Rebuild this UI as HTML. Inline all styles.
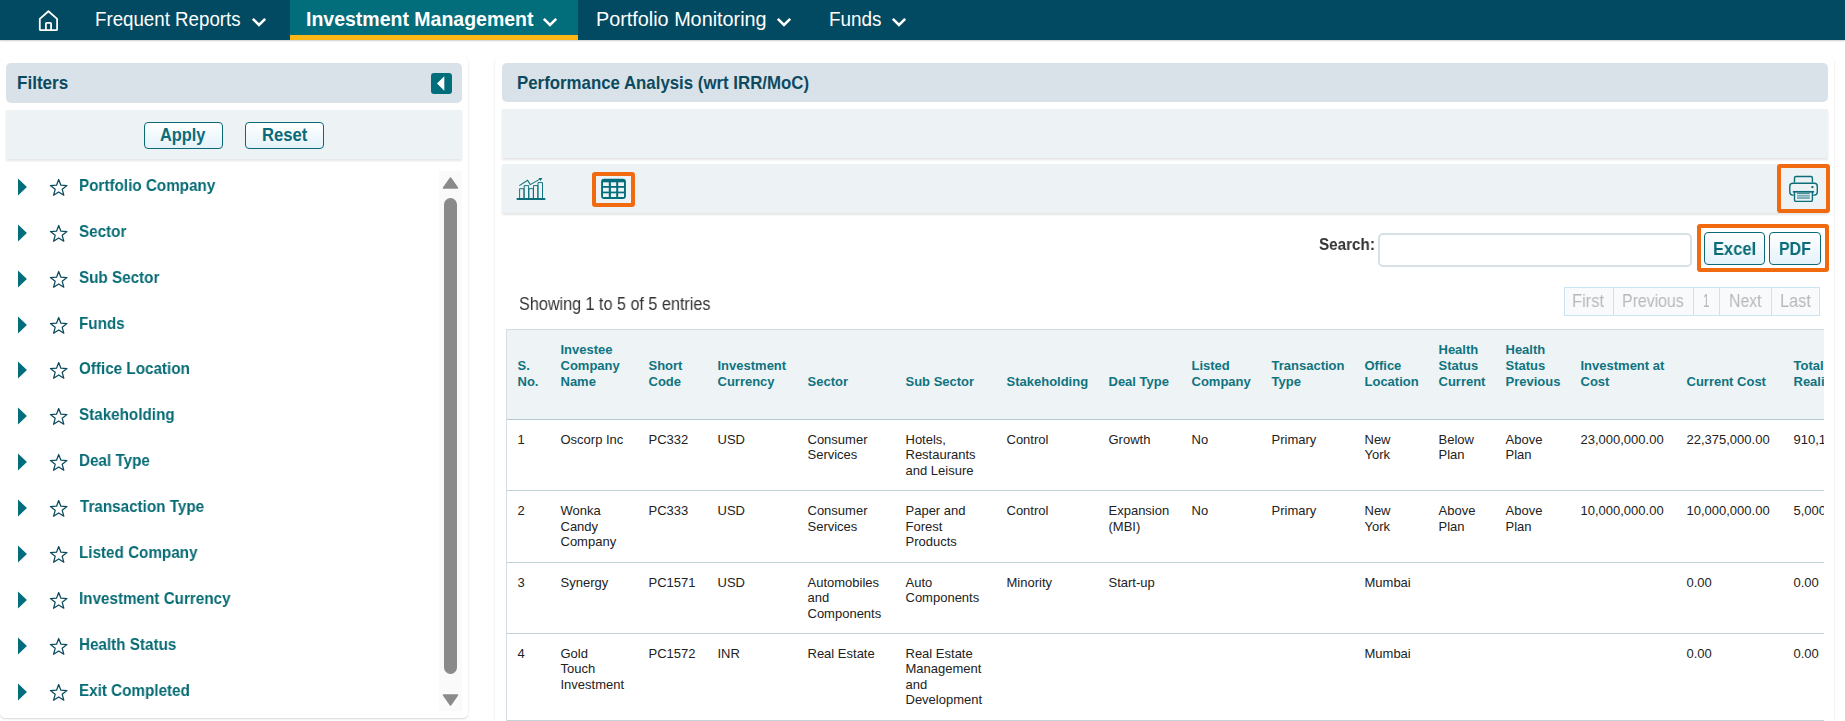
<!DOCTYPE html>
<html><head><meta charset="utf-8">
<style>
*{box-sizing:border-box;margin:0;padding:0}
html,body{width:1845px;height:721px;overflow:hidden;background:#fff;font-family:"Liberation Sans",sans-serif;position:relative}
.abs{position:absolute}
.tx{position:absolute;white-space:nowrap;transform-origin:0 0}
.hdr{background:#d8e2e8;border-radius:5px}
.bar{background:#edf2f5;box-shadow:0 2px 2px rgba(0,0,0,.10)}
.btn{position:absolute;border:1.5px solid #0b6a77;border-radius:4px;background:linear-gradient(#ffffff,#e4f2fa)}
.th{height:89px;background:#eef3f6}
.th th{text-align:left;vertical-align:bottom;padding:0 0 29px 10.5px;font-size:13px;font-weight:700;color:#0f7380;line-height:15.75px;white-space:nowrap;border-bottom:1.5px solid #b3c9d2}
.tr td{text-align:left;vertical-align:top;padding:12px 0 0 10.5px;font-size:13px;color:#222;line-height:15.6px;white-space:nowrap;border-bottom:1.5px solid #c0d2da}
.panel{border-radius:5px;box-shadow:0 1px 2px rgba(0,0,0,.16);background:#fff}

</style></head><body>
<div class="abs" style="left:0;top:0;width:1845px;height:40px;background:#024a62;box-shadow:0 1px 1.5px rgba(0,0,0,.2)"></div>
<div class="abs" style="left:290px;top:0;width:288px;height:40px;background:#036e7b;border-bottom:5px solid #fbb715"></div>
<svg class="abs" style="left:37px;top:9px" width="23" height="24" viewBox="0 0 23 24">
    <path d="M2.8 9.9 L11.45 2.3 L20.1 9.9 V20.2 Q20.1 21.2 19.1 21.2 H3.8 Q2.8 21.2 2.8 20.2 Z" fill="none" stroke="#fff" stroke-width="1.8" stroke-linejoin="round"/>
    <path d="M8.9 21.2 V14.8 Q8.9 13.8 9.9 13.8 H13.1 Q14.1 13.8 14.1 14.8 V21.2" fill="none" stroke="#fff" stroke-width="1.8"/>
  </svg>
<div class="tx" style="left:95.33px;top:9px;font-size:20px;line-height:20px;font-weight:400;color:#fff;transform:scaleX(0.9353);">Frequent Reports</div>
<svg class="abs" style="left:251px;top:17px" width="16" height="11" viewBox="0 0 16 11"><path d="M1.8 1.8 L8 8 L14.2 1.8" fill="none" stroke="#fff" stroke-width="2.6"/></svg>
<div class="tx" style="left:305.93px;top:9px;font-size:20px;line-height:20px;font-weight:700;color:#fff;transform:scaleX(0.9746);">Investment Management</div>
<svg class="abs" style="left:542px;top:17px" width="16" height="11" viewBox="0 0 16 11"><path d="M1.8 1.8 L8 8 L14.2 1.8" fill="none" stroke="#fff" stroke-width="2.6"/></svg>
<div class="tx" style="left:596.02px;top:9px;font-size:20px;line-height:20px;font-weight:400;color:#fff;transform:scaleX(0.9899);">Portfolio Monitoring</div>
<svg class="abs" style="left:776px;top:17px" width="16" height="11" viewBox="0 0 16 11"><path d="M1.8 1.8 L8 8 L14.2 1.8" fill="none" stroke="#fff" stroke-width="2.6"/></svg>
<div class="tx" style="left:829.11px;top:9px;font-size:20px;line-height:20px;font-weight:400;color:#fff;transform:scaleX(0.9453);">Funds</div>
<svg class="abs" style="left:891px;top:17px" width="16" height="11" viewBox="0 0 16 11"><path d="M1.8 1.8 L8 8 L14.2 1.8" fill="none" stroke="#fff" stroke-width="2.6"/></svg>
<div class="abs panel" style="left:0px;top:57px;width:468px;height:661px"></div>
<div class="abs hdr" style="left:6px;top:63px;width:456px;height:40px"></div>
<div class="tx" style="left:17.00px;top:73px;font-size:19px;line-height:19px;font-weight:700;color:#0d4a60;transform:scaleX(0.8982);">Filters</div>
<div class="abs" style="left:431px;top:73px;width:21px;height:21px;background:#036e7b;border-radius:3px"><svg class="abs" style="left:0;top:0" width="21" height="21" viewBox="0 0 21 21"><path d="M13.3 3.2 L6 10.5 L13.3 17.8 Z" fill="#fff"/></svg></div>
<div class="abs bar" style="left:6px;top:110px;width:456px;height:49px"></div>
<div class="btn" style="left:144px;top:122px;width:79px;height:27px"></div>
<div class="btn" style="left:245px;top:122px;width:79px;height:27px"></div>
<div class="tx" style="left:160.14px;top:125px;font-size:19px;line-height:19px;font-weight:700;color:#0a6c78;transform:scaleX(0.8596);">Apply</div>
<div class="tx" style="left:261.82px;top:125px;font-size:19px;line-height:19px;font-weight:700;color:#0a6c78;transform:scaleX(0.8765);">Reset</div>
<svg class="abs" style="left:17px;top:178.00px" width="11" height="18" viewBox="0 0 11 18"><path d="M1 0.6 L9.9 9 L1 17.4 Z" fill="#036e7b"/></svg>
<svg class="abs" style="left:49px;top:178.00px" width="20" height="21" viewBox="0 0 20 21"><path d="M9.70 1.50 L11.87 7.21 L17.97 7.51 L13.22 11.34 L14.81 17.24 L9.70 13.90 L4.59 17.24 L6.18 11.34 L1.43 7.51 L7.53 7.21 Z" fill="none" stroke="#0d4a5e" stroke-width="1.25" stroke-linejoin="round"/></svg>
<div class="tx" style="left:78.88px;top:177px;font-size:16.5px;line-height:16.5px;font-weight:700;color:#076b74;transform:scaleX(0.9231);will-change:transform;">Portfolio Company</div>
<svg class="abs" style="left:17px;top:223.87px" width="11" height="18" viewBox="0 0 11 18"><path d="M1 0.6 L9.9 9 L1 17.4 Z" fill="#036e7b"/></svg>
<svg class="abs" style="left:49px;top:223.87px" width="20" height="21" viewBox="0 0 20 21"><path d="M9.70 1.50 L11.87 7.21 L17.97 7.51 L13.22 11.34 L14.81 17.24 L9.70 13.90 L4.59 17.24 L6.18 11.34 L1.43 7.51 L7.53 7.21 Z" fill="none" stroke="#0d4a5e" stroke-width="1.25" stroke-linejoin="round"/></svg>
<div class="tx" style="left:78.88px;top:223px;font-size:16.5px;line-height:16.5px;font-weight:700;color:#076b74;transform:scaleX(0.9231);will-change:transform;">Sector</div>
<svg class="abs" style="left:17px;top:269.74px" width="11" height="18" viewBox="0 0 11 18"><path d="M1 0.6 L9.9 9 L1 17.4 Z" fill="#036e7b"/></svg>
<svg class="abs" style="left:49px;top:269.74px" width="20" height="21" viewBox="0 0 20 21"><path d="M9.70 1.50 L11.87 7.21 L17.97 7.51 L13.22 11.34 L14.81 17.24 L9.70 13.90 L4.59 17.24 L6.18 11.34 L1.43 7.51 L7.53 7.21 Z" fill="none" stroke="#0d4a5e" stroke-width="1.25" stroke-linejoin="round"/></svg>
<div class="tx" style="left:78.88px;top:269px;font-size:16.5px;line-height:16.5px;font-weight:700;color:#076b74;transform:scaleX(0.9231);will-change:transform;">Sub Sector</div>
<svg class="abs" style="left:17px;top:315.61px" width="11" height="18" viewBox="0 0 11 18"><path d="M1 0.6 L9.9 9 L1 17.4 Z" fill="#036e7b"/></svg>
<svg class="abs" style="left:49px;top:315.61px" width="20" height="21" viewBox="0 0 20 21"><path d="M9.70 1.50 L11.87 7.21 L17.97 7.51 L13.22 11.34 L14.81 17.24 L9.70 13.90 L4.59 17.24 L6.18 11.34 L1.43 7.51 L7.53 7.21 Z" fill="none" stroke="#0d4a5e" stroke-width="1.25" stroke-linejoin="round"/></svg>
<div class="tx" style="left:78.88px;top:315px;font-size:16.5px;line-height:16.5px;font-weight:700;color:#076b74;transform:scaleX(0.9231);will-change:transform;">Funds</div>
<svg class="abs" style="left:17px;top:361.48px" width="11" height="18" viewBox="0 0 11 18"><path d="M1 0.6 L9.9 9 L1 17.4 Z" fill="#036e7b"/></svg>
<svg class="abs" style="left:49px;top:361.48px" width="20" height="21" viewBox="0 0 20 21"><path d="M9.70 1.50 L11.87 7.21 L17.97 7.51 L13.22 11.34 L14.81 17.24 L9.70 13.90 L4.59 17.24 L6.18 11.34 L1.43 7.51 L7.53 7.21 Z" fill="none" stroke="#0d4a5e" stroke-width="1.25" stroke-linejoin="round"/></svg>
<div class="tx" style="left:78.88px;top:360px;font-size:16.5px;line-height:16.5px;font-weight:700;color:#076b74;transform:scaleX(0.9231);will-change:transform;">Office Location</div>
<svg class="abs" style="left:17px;top:407.35px" width="11" height="18" viewBox="0 0 11 18"><path d="M1 0.6 L9.9 9 L1 17.4 Z" fill="#036e7b"/></svg>
<svg class="abs" style="left:49px;top:407.35px" width="20" height="21" viewBox="0 0 20 21"><path d="M9.70 1.50 L11.87 7.21 L17.97 7.51 L13.22 11.34 L14.81 17.24 L9.70 13.90 L4.59 17.24 L6.18 11.34 L1.43 7.51 L7.53 7.21 Z" fill="none" stroke="#0d4a5e" stroke-width="1.25" stroke-linejoin="round"/></svg>
<div class="tx" style="left:78.88px;top:406px;font-size:16.5px;line-height:16.5px;font-weight:700;color:#076b74;transform:scaleX(0.9231);will-change:transform;">Stakeholding</div>
<svg class="abs" style="left:17px;top:453.22px" width="11" height="18" viewBox="0 0 11 18"><path d="M1 0.6 L9.9 9 L1 17.4 Z" fill="#036e7b"/></svg>
<svg class="abs" style="left:49px;top:453.22px" width="20" height="21" viewBox="0 0 20 21"><path d="M9.70 1.50 L11.87 7.21 L17.97 7.51 L13.22 11.34 L14.81 17.24 L9.70 13.90 L4.59 17.24 L6.18 11.34 L1.43 7.51 L7.53 7.21 Z" fill="none" stroke="#0d4a5e" stroke-width="1.25" stroke-linejoin="round"/></svg>
<div class="tx" style="left:78.88px;top:452px;font-size:16.5px;line-height:16.5px;font-weight:700;color:#076b74;transform:scaleX(0.9231);will-change:transform;">Deal Type</div>
<svg class="abs" style="left:17px;top:499.09px" width="11" height="18" viewBox="0 0 11 18"><path d="M1 0.6 L9.9 9 L1 17.4 Z" fill="#036e7b"/></svg>
<svg class="abs" style="left:49px;top:499.09px" width="20" height="21" viewBox="0 0 20 21"><path d="M9.70 1.50 L11.87 7.21 L17.97 7.51 L13.22 11.34 L14.81 17.24 L9.70 13.90 L4.59 17.24 L6.18 11.34 L1.43 7.51 L7.53 7.21 Z" fill="none" stroke="#0d4a5e" stroke-width="1.25" stroke-linejoin="round"/></svg>
<div class="tx" style="left:79.80px;top:498px;font-size:16.5px;line-height:16.5px;font-weight:700;color:#076b74;transform:scaleX(0.9231);will-change:transform;">Transaction Type</div>
<svg class="abs" style="left:17px;top:544.96px" width="11" height="18" viewBox="0 0 11 18"><path d="M1 0.6 L9.9 9 L1 17.4 Z" fill="#036e7b"/></svg>
<svg class="abs" style="left:49px;top:544.96px" width="20" height="21" viewBox="0 0 20 21"><path d="M9.70 1.50 L11.87 7.21 L17.97 7.51 L13.22 11.34 L14.81 17.24 L9.70 13.90 L4.59 17.24 L6.18 11.34 L1.43 7.51 L7.53 7.21 Z" fill="none" stroke="#0d4a5e" stroke-width="1.25" stroke-linejoin="round"/></svg>
<div class="tx" style="left:78.88px;top:544px;font-size:16.5px;line-height:16.5px;font-weight:700;color:#076b74;transform:scaleX(0.9231);will-change:transform;">Listed Company</div>
<svg class="abs" style="left:17px;top:590.83px" width="11" height="18" viewBox="0 0 11 18"><path d="M1 0.6 L9.9 9 L1 17.4 Z" fill="#036e7b"/></svg>
<svg class="abs" style="left:49px;top:590.83px" width="20" height="21" viewBox="0 0 20 21"><path d="M9.70 1.50 L11.87 7.21 L17.97 7.51 L13.22 11.34 L14.81 17.24 L9.70 13.90 L4.59 17.24 L6.18 11.34 L1.43 7.51 L7.53 7.21 Z" fill="none" stroke="#0d4a5e" stroke-width="1.25" stroke-linejoin="round"/></svg>
<div class="tx" style="left:78.88px;top:590px;font-size:16.5px;line-height:16.5px;font-weight:700;color:#076b74;transform:scaleX(0.9231);will-change:transform;">Investment Currency</div>
<svg class="abs" style="left:17px;top:636.70px" width="11" height="18" viewBox="0 0 11 18"><path d="M1 0.6 L9.9 9 L1 17.4 Z" fill="#036e7b"/></svg>
<svg class="abs" style="left:49px;top:636.70px" width="20" height="21" viewBox="0 0 20 21"><path d="M9.70 1.50 L11.87 7.21 L17.97 7.51 L13.22 11.34 L14.81 17.24 L9.70 13.90 L4.59 17.24 L6.18 11.34 L1.43 7.51 L7.53 7.21 Z" fill="none" stroke="#0d4a5e" stroke-width="1.25" stroke-linejoin="round"/></svg>
<div class="tx" style="left:78.88px;top:636px;font-size:16.5px;line-height:16.5px;font-weight:700;color:#076b74;transform:scaleX(0.9231);will-change:transform;">Health Status</div>
<svg class="abs" style="left:17px;top:682.57px" width="11" height="18" viewBox="0 0 11 18"><path d="M1 0.6 L9.9 9 L1 17.4 Z" fill="#036e7b"/></svg>
<svg class="abs" style="left:49px;top:682.57px" width="20" height="21" viewBox="0 0 20 21"><path d="M9.70 1.50 L11.87 7.21 L17.97 7.51 L13.22 11.34 L14.81 17.24 L9.70 13.90 L4.59 17.24 L6.18 11.34 L1.43 7.51 L7.53 7.21 Z" fill="none" stroke="#0d4a5e" stroke-width="1.25" stroke-linejoin="round"/></svg>
<div class="tx" style="left:78.88px;top:682px;font-size:16.5px;line-height:16.5px;font-weight:700;color:#076b74;transform:scaleX(0.9231);will-change:transform;">Exit Completed</div>
<div class="abs" style="left:439px;top:171px;width:23px;height:540px;background:#fafafa"></div>
<svg class="abs" style="left:441px;top:175px" width="19" height="16" viewBox="0 0 19 16"><path d="M9.5 3 L16.5 13 H2.5 Z" fill="#8a8a8a" stroke="#8a8a8a" stroke-width="1.5" stroke-linejoin="round"/></svg>
<div class="abs" style="left:444px;top:198px;width:13px;height:476px;background:#8a8a8a;border-radius:6.5px"></div>
<svg class="abs" style="left:441px;top:692px" width="19" height="16" viewBox="0 0 19 16"><path d="M2.5 3 H16.5 L9.5 13 Z" fill="#8a8a8a" stroke="#8a8a8a" stroke-width="1.5" stroke-linejoin="round"/></svg>
<div class="abs panel" style="left:495px;top:57px;width:1339px;height:700px"></div>
<div class="abs hdr" style="left:502px;top:63px;width:1326px;height:39px"></div>
<div class="tx" style="left:517.11px;top:73px;font-size:19px;line-height:19px;font-weight:700;color:#0d4a60;transform:scaleX(0.8857);">Performance Analysis (wrt IRR/MoC)</div>
<div class="abs bar" style="left:502px;top:109px;width:1326px;height:49px"></div>
<div class="abs bar" style="left:502px;top:164px;width:1326px;height:49px"></div>
<!-- toolbar icons -->
<svg class="abs" style="left:512px;top:172px" width="40" height="32" viewBox="0 0 40 32">
  <g fill="none" stroke="#0b6e7a" stroke-width="0.95">
    <path d="M7.6 26 V16.7 H11.9 V26"/>
    <path d="M12.2 26 V13.6 H16.6 V26"/>
    <path d="M16.9 26 V16.7 H21.3 V26"/>
    <path d="M21.5 26 V13.6 H25.8 V26"/>
    <path d="M26 26 V10.6 H30.5 V26"/>
    <path d="M7.3 13.6 L15.6 8.3 L18.2 12.6 L27.6 7.4" stroke-width="1.05"/>
  </g>
  <path d="M5.5 27 H32.5" stroke="#0b6e7a" stroke-width="2.2" stroke-linecap="round"/>
  <path d="M26.5 6 H30.3 L28.6 8.9 Z" fill="#0b6e7a"/>
</svg>
<div class="abs" style="left:592px;top:172px;width:43px;height:35px;border:4px solid #f26a0f;border-radius:3px"></div>
<svg class="abs" style="left:588px;top:168px" width="52" height="44" viewBox="0 0 52 44">
  <rect x="13.1" y="10.7" width="24.8" height="20.4" rx="3" fill="#036e7b"/>
  <g fill="#eef3f6">
    <rect x="15" y="14.3" width="5.8" height="3.7"/><rect x="22.9" y="14.3" width="5.3" height="3.7"/><rect x="30.2" y="14.3" width="5.8" height="3.7"/>
    <rect x="15" y="19.8" width="5.8" height="3.8"/><rect x="22.9" y="19.8" width="5.3" height="3.8"/><rect x="30.2" y="19.8" width="5.8" height="3.8"/>
    <rect x="15" y="25.3" width="5.8" height="3.7"/><rect x="22.9" y="25.3" width="5.3" height="3.7"/><rect x="30.2" y="25.3" width="5.8" height="3.7"/>
  </g>
</svg>
<div class="abs" style="left:1777px;top:164px;width:53px;height:49px;border:4px solid #f26a0f;border-radius:3px"></div>
<svg class="abs" style="left:1782px;top:170px" width="42" height="38" viewBox="0 0 42 38">
  <g fill="none" stroke="#0b6e7a" stroke-width="1.4" stroke-linejoin="round">
    <path d="M12.5 12.6 V7.9 Q12.5 6.5 13.9 6.5 H29 Q30.4 6.5 30.4 7.9 V12.6"/>
    <path d="M11.8 25.1 H10.8 Q7.8 25.1 7.8 22.1 V16.3 Q7.8 13.3 10.8 13.3 H32.3 Q35.3 13.3 35.3 16.3 V22.1 Q35.3 25.1 32.3 25.1 H31.1"/>
    <path d="M12.5 21.8 V29.9 Q12.5 31.4 14 31.4 H28.9 Q30.4 31.4 30.4 29.9 V21.8"/>
  </g>
  <path d="M10.8 21.8 H32.1" stroke="#0b6e7a" stroke-width="1.7"/>
  <path d="M15 23.3 H27.9" stroke="#0b6e7a" stroke-width="0.9"/>
  <rect x="15" y="24.7" width="12.9" height="4.3" fill="#0b6e7a" opacity="0.5"/>
  <path d="M15 26.7 H27.9" stroke="#edf2f5" stroke-width="0.6" opacity="0.6"/>
  <ellipse cx="30.4" cy="17.1" rx="1.3" ry="1.1" fill="#0b6e7a"/>
</svg>


<div class="tx" style="left:1318.60px;top:236px;font-size:17px;line-height:17px;font-weight:700;color:#333333;transform:scaleX(0.8967);will-change:transform;">Search:</div>
<div class="abs" style="left:1378px;top:233px;width:314px;height:34px;border:2px solid #d6e1e6;border-radius:5px;background:#fff"></div>
<div class="abs" style="left:1697px;top:224px;width:132px;height:48px;border:4px solid #f26a0f;border-radius:3px"></div>
<div class="btn" style="left:1704px;top:232px;width:61px;height:33px"></div>
<div class="btn" style="left:1769px;top:232px;width:52px;height:33px"></div>
<div class="tx" style="left:1713.01px;top:240px;font-size:18.5px;line-height:18.5px;font-weight:700;color:#0a6c78;transform:scaleX(0.8913);will-change:transform;">Excel</div>
<div class="tx" style="left:1778.84px;top:240px;font-size:18.5px;line-height:18.5px;font-weight:700;color:#0a6c78;transform:scaleX(0.8611);will-change:transform;">PDF</div>
<div class="tx" style="left:519.28px;top:296px;font-size:17.5px;line-height:17.5px;font-weight:400;color:#333333;transform:scaleX(0.9238);will-change:transform;">Showing 1 to 5 of 5 entries</div>
<div class="abs" style="left:1564px;top:287px;width:256px;height:29px;background:#f8fafb;border:1px solid #c9e5f4"></div>
<div class="abs" style="left:1613px;top:287px;width:1px;height:29px;background:#c9e5f4"></div>
<div class="abs" style="left:1693px;top:287px;width:1px;height:29px;background:#c9e5f4"></div>
<div class="abs" style="left:1719px;top:287px;width:1px;height:29px;background:#c9e5f4"></div>
<div class="abs" style="left:1771px;top:287px;width:1px;height:29px;background:#c9e5f4"></div>
<div class="tx" style="left:1572.06px;top:293px;font-size:17.5px;line-height:17.5px;font-weight:400;color:#b8b8b8;transform:scaleX(0.9394);will-change:transform;">First</div>
<div class="tx" style="left:1622.09px;top:293px;font-size:17.5px;line-height:17.5px;font-weight:400;color:#b8b8b8;transform:scaleX(0.9075);will-change:transform;">Previous</div>
<div class="tx" style="left:1703.04px;top:293px;font-size:17.5px;line-height:17.5px;font-weight:400;color:#b8b8b8;transform:scaleX(0.6625);will-change:transform;">1</div>
<div class="tx" style="left:1728.89px;top:293px;font-size:17.5px;line-height:17.5px;font-weight:400;color:#b8b8b8;transform:scaleX(0.9057);will-change:transform;">Next</div>
<div class="tx" style="left:1779.57px;top:293px;font-size:17.5px;line-height:17.5px;font-weight:400;color:#b8b8b8;transform:scaleX(0.9313);will-change:transform;">Last</div>
<div id="tbl" class="abs" style="left:506px;top:329px;width:1318px;height:400px;overflow:hidden;border-top:1px solid #d5dde2;border-left:1px solid #d5dde2">
<table style="border-collapse:collapse;table-layout:fixed;width:1394px">
<colgroup><col style="width:43px"><col style="width:88px"><col style="width:69px"><col style="width:90px"><col style="width:98px"><col style="width:101px"><col style="width:102px"><col style="width:83px"><col style="width:80px"><col style="width:93px"><col style="width:74px"><col style="width:67px"><col style="width:75px"><col style="width:106px"><col style="width:107px"><col style="width:119px"></colgroup>
<tr class="th"><th>S.<br>No.</th><th>Investee<br>Company<br>Name</th><th>Short<br>Code</th><th>Investment<br>Currency</th><th>Sector</th><th>Sub Sector</th><th>Stakeholding</th><th>Deal Type</th><th>Listed<br>Company</th><th>Transaction<br>Type</th><th>Office<br>Location</th><th>Health<br>Status<br>Current</th><th>Health<br>Status<br>Previous</th><th>Investment at<br>Cost</th><th>Current Cost</th><th>Total<br>Realized</th></tr>
<tr class="tr" style="height:71.5px"><td>1</td><td>Oscorp Inc</td><td>PC332</td><td>USD</td><td>Consumer<br>Services</td><td>Hotels,<br>Restaurants<br>and Leisure</td><td>Control</td><td>Growth</td><td>No</td><td>Primary</td><td>New<br>York</td><td>Below<br>Plan</td><td>Above<br>Plan</td><td>23,000,000.00</td><td>22,375,000.00</td><td>910,125.00</td></tr>
<tr class="tr" style="height:71.5px"><td>2</td><td>Wonka<br>Candy<br>Company</td><td>PC333</td><td>USD</td><td>Consumer<br>Services</td><td>Paper and<br>Forest<br>Products</td><td>Control</td><td>Expansion<br>(MBI)</td><td>No</td><td>Primary</td><td>New<br>York</td><td>Above<br>Plan</td><td>Above<br>Plan</td><td>10,000,000.00</td><td>10,000,000.00</td><td>5,000,000.00</td></tr>
<tr class="tr" style="height:71px"><td>3</td><td>Synergy</td><td>PC1571</td><td>USD</td><td>Automobiles<br>and<br>Components</td><td>Auto<br>Components</td><td>Minority</td><td>Start-up</td><td></td><td></td><td>Mumbai</td><td></td><td></td><td></td><td>0.00</td><td>0.00</td></tr>
<tr class="tr" style="height:87px"><td>4</td><td>Gold<br>Touch<br>Investment</td><td>PC1572</td><td>INR</td><td>Real Estate</td><td>Real Estate<br>Management<br>and<br>Development</td><td></td><td></td><td></td><td></td><td>Mumbai</td><td></td><td></td><td></td><td>0.00</td><td>0.00</td></tr>
</table>
</div>

</body></html>
